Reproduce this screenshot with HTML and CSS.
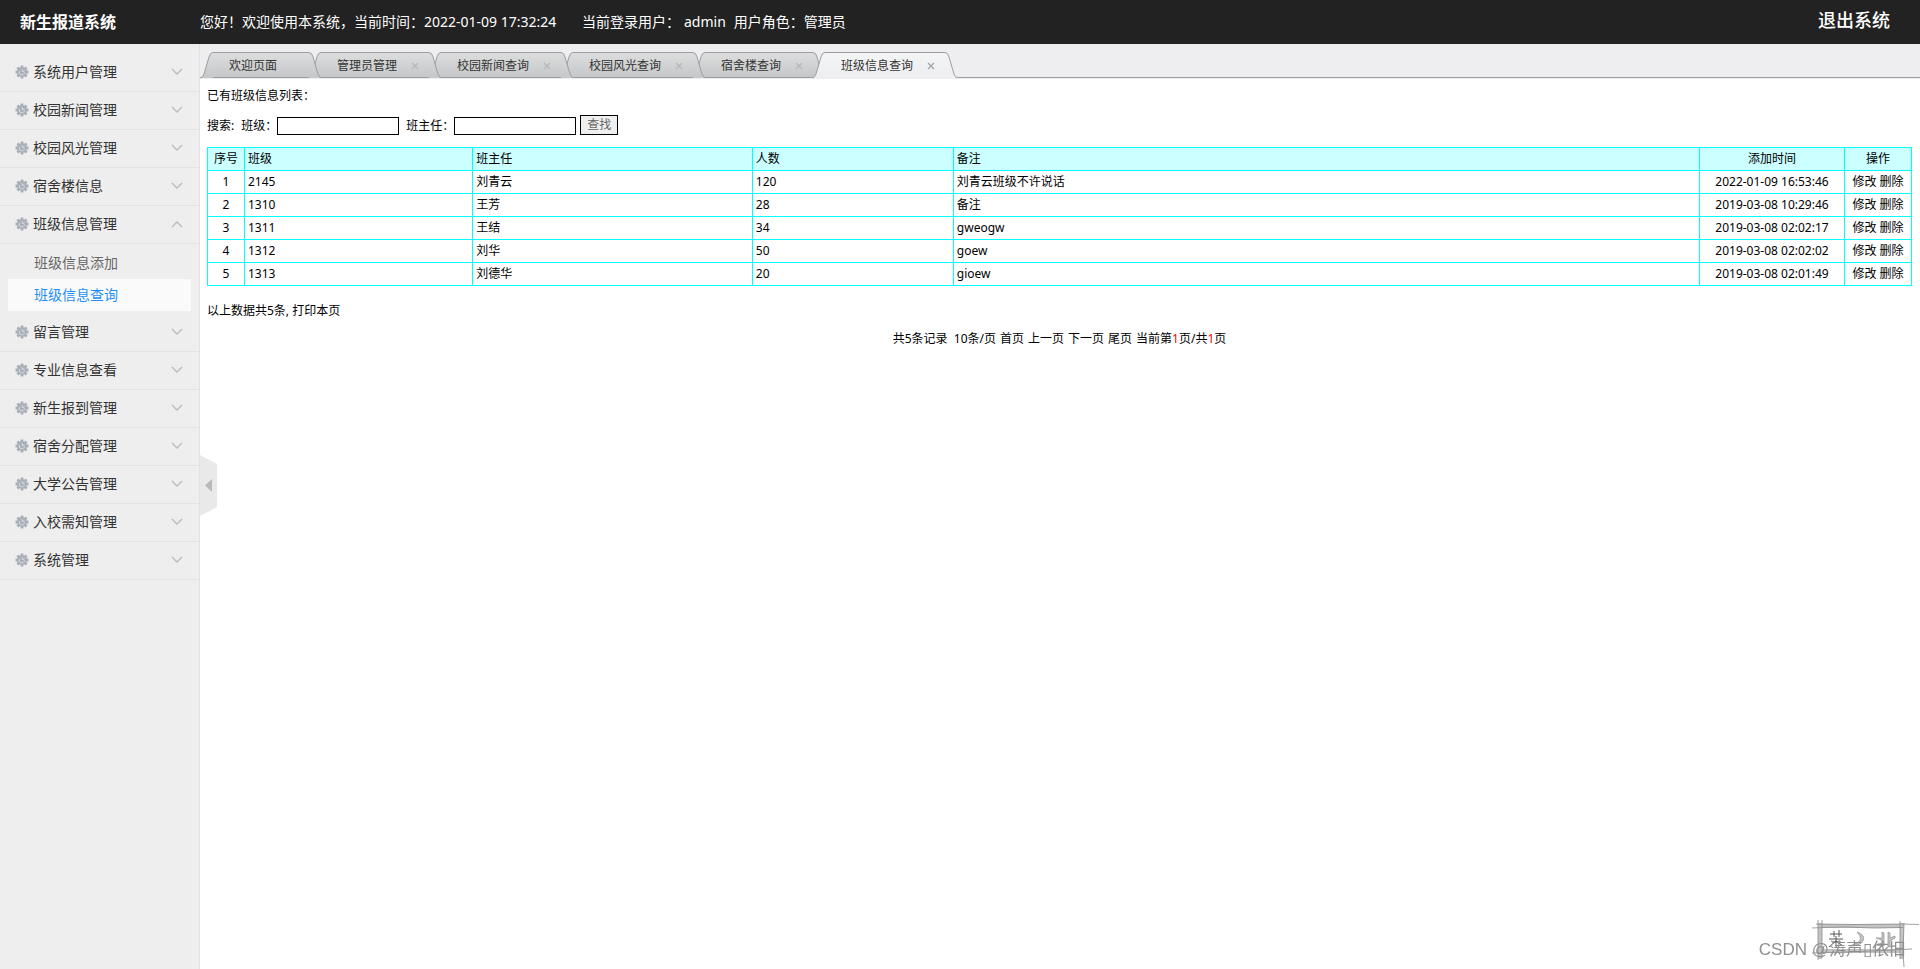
FILE: index.html
```html
<!DOCTYPE html>
<html lang="zh-CN">
<head>
  <meta charset="UTF-8">
  <meta name="viewport" content="width=device-width, initial-scale=1.0">
  <title>新生报道系统</title>
  <link rel="stylesheet" href="styles.css">
</head>
<body>
  <!-- shared icons -->
  <svg class="sprite" width="0" height="0">
    <defs>
      <linearGradient id="tabFill" x1="0" y1="0" x2="0" y2="1">
        <stop offset="0" stop-color="#dcdddd"/>
        <stop offset="1" stop-color="#c6c7c9"/>
      </linearGradient>
      <linearGradient id="tabFillOn" x1="0" y1="0" x2="0" y2="1">
        <stop offset="0" stop-color="#f3f5f5"/>
        <stop offset="1" stop-color="#eeeef0"/>
      </linearGradient>
    </defs>
    <symbol id="gear" viewBox="0 0 14 14">
      <path d="M7 .5v13M.5 7h13M2.400 2.400l9.200 9.200M11.600 2.400l-9.200 9.200" stroke="#a9afb8" stroke-width="2.800"/>
      <circle cx="7" cy="7" r="4.800" fill="#a9afb8"/>
      <path d="M4.800 6a2.500 2.500 0 1 0 4.600 1.400M7 4.200l.6 2.400 1.800-.8" fill="none" stroke="#dfe1e4" stroke-width="1"/>
    </symbol>
    <symbol id="down" viewBox="0 0 12 8"><path d="M1 1l5 5 5-5" fill="none" stroke="#b9bbbd" stroke-width="1.3"/></symbol>
    <symbol id="up" viewBox="0 0 12 8"><path d="M1 7l5-5 5 5" fill="none" stroke="#b9bbbd" stroke-width="1.3"/></symbol>
    <symbol id="close" viewBox="0 0 8 8"><path d="M1 1l6 6M7 1L1 7" fill="none" stroke="currentColor" stroke-width="1.3"/></symbol>
    <symbol id="capL" viewBox="0 0 12 26">
      <path d="M0 26C2 25 2 24 3 22L8 5Q9 .5 12 .5V26z" class="cap-fill"/>
      <path d="M0 25.5Q2 25 3 22L8 5Q9 .5 12 .5" class="cap-line"/>
    </symbol>
    <symbol id="capR" viewBox="0 0 12 26">
      <path d="M12 26C10 25 10 24 9 22L4 5Q3 .5 0 .5V26z" class="cap-fill"/>
      <path d="M12 25.5Q10 25 9 22L4 5Q3 .5 0 .5" class="cap-line"/>
    </symbol>
  </svg>

  <header class="header">
    <h1 class="logo">新生报道系统</h1>
    <div class="welcome">
      <span class="now">您好！欢迎使用本系统，当前时间：2022-01-09 17:32:24</span>
      <span class="user">当前登录用户：</span>
      <span class="name">admin</span>
      <span>用户角色：管理员</span>
    </div>
    <a class="logout" href="#">退出系统</a>
  </header>

  <div class="main">
    <nav class="sidebar">
      <a class="item" href="#"><svg class="gear"><use href="#gear"/></svg>系统用户管理<svg class="arrow"><use href="#down"/></svg></a>
      <a class="item" href="#"><svg class="gear"><use href="#gear"/></svg>校园新闻管理<svg class="arrow"><use href="#down"/></svg></a>
      <a class="item" href="#"><svg class="gear"><use href="#gear"/></svg>校园风光管理<svg class="arrow"><use href="#down"/></svg></a>
      <a class="item" href="#"><svg class="gear"><use href="#gear"/></svg>宿舍楼信息<svg class="arrow"><use href="#down"/></svg></a>
      <a class="item" href="#"><svg class="gear"><use href="#gear"/></svg>班级信息管理<svg class="arrow"><use href="#up"/></svg></a>
      <div class="submenu">
        <a href="#">班级信息添加</a>
        <a class="current" href="#">班级信息查询</a>
      </div>
      <a class="item" href="#"><svg class="gear"><use href="#gear"/></svg>留言管理<svg class="arrow"><use href="#down"/></svg></a>
      <a class="item" href="#"><svg class="gear"><use href="#gear"/></svg>专业信息查看<svg class="arrow"><use href="#down"/></svg></a>
      <a class="item" href="#"><svg class="gear"><use href="#gear"/></svg>新生报到管理<svg class="arrow"><use href="#down"/></svg></a>
      <a class="item" href="#"><svg class="gear"><use href="#gear"/></svg>宿舍分配管理<svg class="arrow"><use href="#down"/></svg></a>
      <a class="item" href="#"><svg class="gear"><use href="#gear"/></svg>大学公告管理<svg class="arrow"><use href="#down"/></svg></a>
      <a class="item" href="#"><svg class="gear"><use href="#gear"/></svg>入校需知管理<svg class="arrow"><use href="#down"/></svg></a>
      <a class="item" href="#"><svg class="gear"><use href="#gear"/></svg>系统管理<svg class="arrow"><use href="#down"/></svg></a>
    </nav>

    <div class="content">
      <ul class="tabs">
        <li class="tab z5"><svg class="cap"><use href="#capL"/></svg><span class="tab-body">欢迎页面</span><svg class="cap"><use href="#capR"/></svg></li>
        <li class="tab z4"><svg class="cap"><use href="#capL"/></svg><span class="tab-body">管理员管理<button class="close" type="button" aria-label="关闭"><svg><use href="#close"/></svg></button></span><svg class="cap"><use href="#capR"/></svg></li>
        <li class="tab z3"><svg class="cap"><use href="#capL"/></svg><span class="tab-body">校园新闻查询<button class="close" type="button" aria-label="关闭"><svg><use href="#close"/></svg></button></span><svg class="cap"><use href="#capR"/></svg></li>
        <li class="tab z2"><svg class="cap"><use href="#capL"/></svg><span class="tab-body">校园风光查询<button class="close" type="button" aria-label="关闭"><svg><use href="#close"/></svg></button></span><svg class="cap"><use href="#capR"/></svg></li>
        <li class="tab z1"><svg class="cap"><use href="#capL"/></svg><span class="tab-body">宿舍楼查询<button class="close" type="button" aria-label="关闭"><svg><use href="#close"/></svg></button></span><svg class="cap"><use href="#capR"/></svg></li>
        <li class="tab on"><svg class="cap"><use href="#capL"/></svg><span class="tab-body">班级信息查询<button class="close" type="button" aria-label="关闭"><svg><use href="#close"/></svg></button></span><svg class="cap"><use href="#capR"/></svg></li>
      </ul>

      <div class="page">
        <p class="title">已有班级信息列表：</p>
        <form class="search">
          <span>搜索:</span>
          <label for="bj">班级：</label>
          <input id="bj" type="text">
          <label for="bzr">班主任：</label>
          <input id="bzr" type="text">
          <button type="submit">查找</button>
        </form>

        <table class="list">
          <colgroup>
            <col class="c-no"><col class="c-class"><col class="c-teacher"><col class="c-num"><col><col class="c-time"><col class="c-op">
          </colgroup>
          <thead>
            <tr><th class="mid">序号</th><th>班级</th><th>班主任</th><th>人数</th><th>备注</th><th class="mid">添加时间</th><th class="mid">操作</th></tr>
          </thead>
          <tbody>
            <tr><td class="mid">1</td><td>2145</td><td>刘青云</td><td>120</td><td>刘青云班级不许说话</td><td class="mid">2022-01-09 16:53:46</td><td class="mid"><a href="#">修改</a> <a href="#">删除</a></td></tr>
            <tr><td class="mid">2</td><td>1310</td><td>王芳</td><td>28</td><td>备注</td><td class="mid">2019-03-08 10:29:46</td><td class="mid"><a href="#">修改</a> <a href="#">删除</a></td></tr>
            <tr><td class="mid">3</td><td>1311</td><td>王结</td><td>34</td><td>gweogw</td><td class="mid">2019-03-08 02:02:17</td><td class="mid"><a href="#">修改</a> <a href="#">删除</a></td></tr>
            <tr><td class="mid">4</td><td>1312</td><td>刘华</td><td>50</td><td>goew</td><td class="mid">2019-03-08 02:02:02</td><td class="mid"><a href="#">修改</a> <a href="#">删除</a></td></tr>
            <tr><td class="mid">5</td><td>1313</td><td>刘德华</td><td>20</td><td>gioew</td><td class="mid">2019-03-08 02:01:49</td><td class="mid"><a href="#">修改</a> <a href="#">删除</a></td></tr>
          </tbody>
        </table>

        <p class="total">以上数据共5条, <a href="#">打印本页</a></p>
        <p class="pager">
          <span>共5条记录&nbsp; 10条/页</span>
          <a href="#">首页</a>
          <a href="#">上一页</a>
          <a href="#">下一页</a>
          <a href="#">尾页</a>
          <span>当前第<span class="red">1</span>页/共<span class="red">1</span>页</span>
        </p>
      </div>
    </div>
  </div>

  <button class="toggle" type="button" aria-label="收起菜单">
    <svg width="17" height="61" viewBox="0 0 17 61">
      <path d="M0 0l17 9v43L0 61z" fill="#e9e9e9"/>
      <path d="M12 24v13l-7-6.500z" fill="#b9b9b9"/>
    </svg>
  </button>

  <!-- corner stamp -->
  <div class="mark">
    <svg class="stamp" width="108" height="49" viewBox="0 0 108 49" fill="none">
      <path d="M7 6h84M7 31h84" stroke="#c4c4c4" stroke-width="4"/>
      <path d="M8 3v36M90 3v36" stroke="#c4c4c4" stroke-width="4"/>
      <path d="M0 8l12-.5 20-.5 30 1 29-.5M4 4l40 .5 47-.5 16 .5M0 33l40-1 60-3M6 0v40M10 0v38M88 1v38M92 3l-1 30 1 14" stroke="#8c8c8c" stroke-width=".8"/>
      <path d="M18 14h12M22 11v6M27 10v7M17 19h14M24 16v11M24 21l-7 6M24 21l7 5M20 22h9" stroke="#555" stroke-width="1"/>
      <path d="M45 12q9 3 6 9q-3 5-13 5l7-3q7-4 0-11zM64 18h6v-6l2 1v13l-8-1 6-2v-3zM76 12l2 1v5l5-2v2l-5 3v5h5l-7 1z" stroke="#999" stroke-width=".8" fill="#c4c4c4"/>
    </svg>
    <span class="mark-text">CSDN @涛声▯依旧</span>
  </div>
</body>
</html>
```
FILE: styles.css
```css
* {
  margin: 0;
  padding: 0;
  box-sizing: border-box;
}

body {
  font-family: "Noto Sans", "Noto Sans CJK SC", sans-serif;
  font-size: 12px;
  line-height: 18px;
  color: #000;
  background: #fff;
  min-height: 100vh;
  display: flex;
  flex-direction: column;
}

a {
  color: inherit;
  text-decoration: none;
}

.sprite {
  position: absolute;
}

/* header */
.header {
  display: flex;
  align-items: center;
  height: 44px;
  padding: 0 30px 0 20px;
  background: #222;
  color: #fff;
}

.logo {
  width: 180px;
  font-size: 16px;
}

.welcome {
  display: flex;
  flex: 1;
  font-size: 14px;
}

.now {
  min-width: 362px;
  margin-right: 20px;
}

.user {
  margin-right: 4px;
}

.name {
  margin-right: 8px;
}

.logout {
  font-size: 18px;
  font-weight: 500;
  padding-bottom: 4px;
}

.main {
  display: flex;
  flex: 1;
}

/* sidebar */
.sidebar {
  width: 200px;
  padding-top: 10px;
  background: #eee;
  border-right: 1px solid #e2e2e2;
}

.item {
  display: flex;
  align-items: center;
  height: 38px;
  padding: 0 16px 2px 15px;
  border-bottom: 1px solid #e2e2e2;
  font-size: 14px;
  color: #333;
}

.gear {
  width: 14px;
  height: 14px;
  margin-right: 4px;
}

.arrow {
  width: 12px;
  height: 8px;
  margin-left: auto;
}

.submenu {
  padding: 3px 8px;
}

.submenu a {
  display: block;
  height: 32px;
  padding-left: 26px;
  font-size: 14px;
  line-height: 31px;
  color: #666;
}

.submenu .current {
  background: #fafafa;
  color: #1e8ff8;
}

/* tabs */
.content {
  flex: 1;
  min-width: 0;
}

.tabs {
  display: flex;
  padding: 8px 0 0 1px;
  background: #eeeef0;
  border-bottom: 1px solid #eeeef0;
  box-shadow: inset 0 -1px #9d9ea2;
  list-style: none;
}

.tab {
  display: flex;
  position: relative;
  height: 26px;
  margin-right: -12px;
  color: #333;
}

.z5 { z-index: 5; }
.z4 { z-index: 4; }
.z3 { z-index: 3; }
.z2 { z-index: 2; }
.z1 { z-index: 1; }
.on { z-index: 6; }

.cap {
  width: 12px;
  height: 26px;
  fill: url(#tabFill);
}

.cap-line {
  fill: none;
  stroke: #9d9ea2;
}

.tab-body {
  display: flex;
  align-items: center;
  min-width: 96px;
  padding: 2px 7px 0 16px;
  border-top: 1px solid #9d9ea2;
  border-bottom: 1px solid #9d9ea2;
  background: linear-gradient(#dcdddd, #c6c7c9);
}

.on .cap {
  fill: url(#tabFillOn);
}

.on .tab-body {
  border-bottom-color: #eeeef0;
  background: linear-gradient(#f3f5f5, #eeeef0);
}

.close {
  display: flex;
  align-items: center;
  justify-content: center;
  width: 14px;
  height: 14px;
  margin-left: 11px;
  border: 0;
  background: none;
  color: #b4b8bb;
}

.close svg {
  width: 8px;
  height: 8px;
}

.on .close {
  color: #a0a4a8;
}

/* page */
.page {
  padding: 8px 8px 0 7px;
}

.search {
  display: flex;
  align-items: flex-end;
  height: 20px;
  margin: 10px 0 12px;
}

.search span {
  margin-right: 7px;
}

.search input {
  width: 122px;
  height: 18px;
  margin-right: 7px;
  border: 1px solid #000;
}

.search #bzr {
  margin-right: 4px;
}

.search button {
  width: 38px;
  height: 20px;
  border: 1px solid #000;
  background: #efefef;
  color: #666;
  font: inherit;
  line-height: 18px;
}

.list {
  width: 100%;
  table-layout: fixed;
  border-collapse: collapse;
}

.list th,
.list td {
  height: 23px;
  padding: 0 3px;
  border: 1px solid #0ff;
  font-weight: normal;
  text-align: left;
}

.list th {
  background: #cff;
}

.list .mid {
  text-align: center;
}

.c-no { width: 37px; }
.c-class { width: 13.4%; }
.c-teacher { width: 16.4%; }
.c-num { width: 11.8%; }
.c-time { width: 145px; }
.c-op { width: 67px; }

.total {
  margin-top: 16px;
}

.pager {
  display: flex;
  justify-content: center;
  gap: 4px;
  margin-top: 10px;
}

.red {
  color: red;
}

.toggle {
  position: fixed;
  top: 50%;
  left: 200px;
  height: 61px;
  margin-top: -30px;
  border: 0;
  background: none;
}

.toggle svg {
  display: block;
}

.mark {
  position: fixed;
  right: 0;
  bottom: 0;
  width: 168px;
  height: 49px;
}

.stamp {
  position: absolute;
  right: 0;
  bottom: 0;
}

.mark-text {
  position: absolute;
  right: 14px;
  bottom: 7px;
  font-family: "Liberation Sans", "Noto Sans CJK SC", sans-serif;
  font-size: 17px;
  line-height: 24px;
  color: #8f8f8f;
  white-space: nowrap;
}
```
